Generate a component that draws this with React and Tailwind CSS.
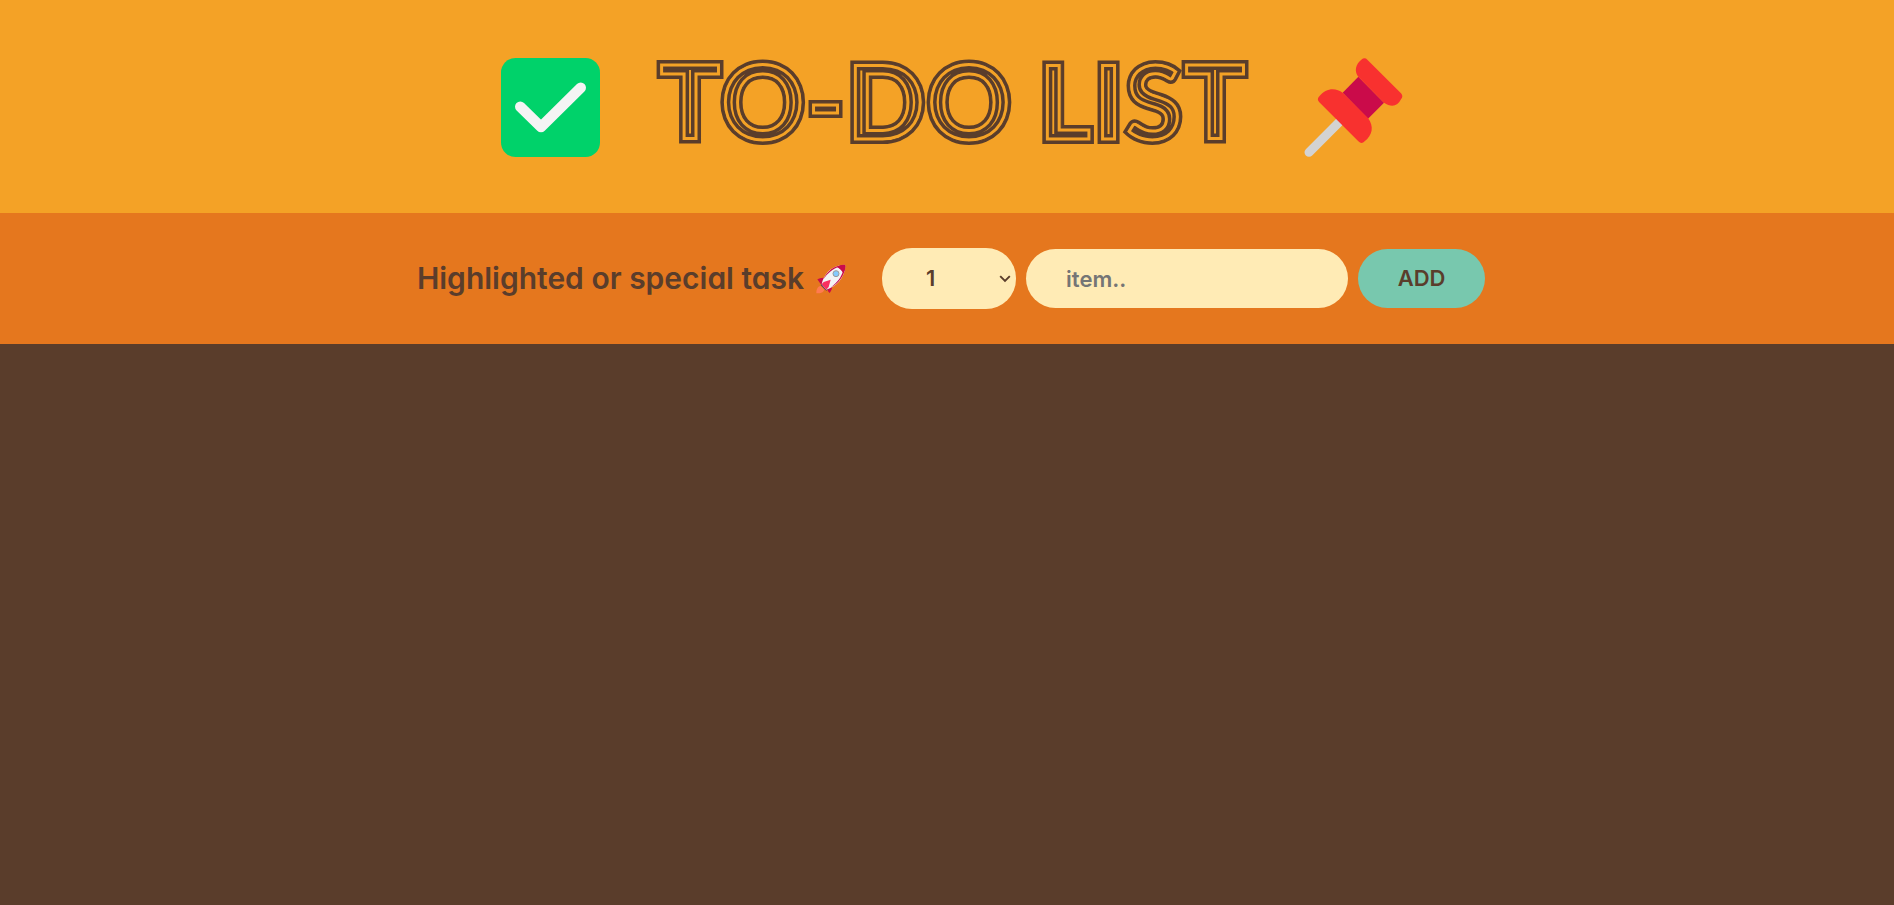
function CheckIcon() {
  return (
    <svg viewBox="0 0 99 99" className="size-[99px] shrink-0" role="img" aria-label="Done">
      <rect width="99" height="99" rx="14.5" fill="#00d26a" />
      <path d="M19.3 48.7 40 69 79.7 29.7" fill="none" stroke="#f4f4f4" strokeWidth="10.6" strokeLinecap="round" strokeLinejoin="round" />
    </svg>
  );
}

function PinIcon() {
  return (
    <svg viewBox="0 0 297 297" className="size-[99px] shrink-0" role="img" aria-label="Pinned">
      <path d="M15 283 104 194" stroke="#d3d3d3" strokeWidth="27" strokeLinecap="round" />
      <path d="M163 56 240 134 192 182 116 104Z" fill="#ca0b4a" />
      <path d="M163 56C152 42 153 25 167 10L172 5Q182-3 190 5L291 106Q299 115 291 124C281 145 262 149 240 134Z" fill="#f8312f" />
      <path d="M116 104C96 88 65 89 46 115Q37 124 46 133L163 250Q173 260 182 250C205 232 211 206 192 180Z" fill="#f8312f" />
    </svg>
  );
}

function RocketIcon() {
  return (
    <svg viewBox="0 0 90 90" className="size-[30px] shrink-0" role="img" aria-label="Rocket">
      <path d="M14 66C4 68 1 76 1 88 10 88 22 87 25 77Z" fill="#ff7a50" />
      <path d="M4 46Q14 40 28 42L20 60 14 60ZM48 64 Q50 76 41 87L36 82 33 72Z" fill="#ca0b4a" />
      <path d="M14 63 20 56 38 74 31 80Z" fill="#533566" />
      <path d="M17 61C22 34 42 5 84 2Q89 2 88 8C84 45 60 67 31 77Z" fill="#f4f4f4" />
      <path d="M22 46C32 22 54 4 84 2Q89 2 88 8C86 34 68 58 45 70 66 54 76 38 80 24L67 9C52 14 34 28 22 46Z" fill="#ca0b4a" />
      <path d="M63 9Q73 2 84 2 89 2 88 8 87 19 82 27 76 15 63 9Z" fill="#ca0b4a" />
      <path d="M17 61 23 54 44 47 38 69 31 77Z" fill="#f92f60" />
      <circle cx="60" cy="29" r="9" fill="#83cbff" stroke="#9b9b9b" strokeWidth="3" />
    </svg>
  );
}

/* Concentric inline lettering: one text, repeated with narrowing strokes. */
function Title() {
  return (
    <h1 className="shrink-0">
      <svg viewBox="0 0 590 99" className="h-[99px] w-[590px] overflow-visible" fill="none">
        <defs>
          <clipPath id="letters">
            <use href="#title" />
          </clipPath>
        </defs>
        <g stroke="#5a3d2b" strokeWidth="6">
          <text id="title" x="1" y="83" className="font-['Lato',sans-serif] text-[106px] font-black">
            TO-DO LIST
          </text>
        </g>
        <g clipPath="url(#letters)">
          <use href="#title" fill="#f4a226" stroke="#5a3d2b" strokeWidth="14" />
          <use href="#title" stroke="#f4a226" strokeWidth="7" />
          <use href="#title" stroke="#5a3d2b" strokeWidth="1" />
        </g>
      </svg>
    </h1>
  );
}

export default function App() {
  return (
    <div className="min-h-screen bg-[#5a3d2b] font-['Inter',sans-serif] text-[#5a3d2b] [font-feature-settings:'cv11']">
      <header className="flex items-center justify-center gap-[57px] bg-[#f4a226] pt-[58px] pb-14 pl-2.5">
        <CheckIcon />
        <Title />
        <PinIcon />
      </header>
      <form className="flex items-center justify-center gap-2.5 bg-[#e5771e] py-[35px] pl-2" onSubmit={(e) => e.preventDefault()}>
        <label htmlFor="task" className="mr-[26px] flex items-center gap-3 text-[30px] font-semibold">
          Highlighted or special task
          <RocketIcon />
        </label>
        <div className="grid items-center">
          <select
            aria-label="Quantity"
            className="col-start-1 row-start-1 h-[61px] w-[134px] appearance-none rounded-[30px] bg-[#ffebb5] pl-11 text-[22px] font-semibold"
          >
            {Array.from({ length: 20 }, (_, i) => (
              <option key={i}>{i + 1}</option>
            ))}
          </select>
          <svg viewBox="0 0 12 8" className="pointer-events-none col-start-1 row-start-1 mr-[5px] h-2 w-3 justify-self-end" fill="none" aria-hidden="true">
            <path d="M1.2 1.2 6 6 10.8 1.2" stroke="currentColor" strokeWidth="1.9" />
          </svg>
        </div>
        <input
          id="task"
          type="text"
          placeholder="item.."
          className="h-[59px] w-[322px] rounded-[30px] bg-[#ffebb5] px-10 text-[22px] font-semibold placeholder:text-[#757575]"
        />
        <button className="h-[59px] w-[127px] rounded-[30px] bg-[#78c8ae] text-[22px] font-semibold">ADD</button>
      </form>
    </div>
  );
}
